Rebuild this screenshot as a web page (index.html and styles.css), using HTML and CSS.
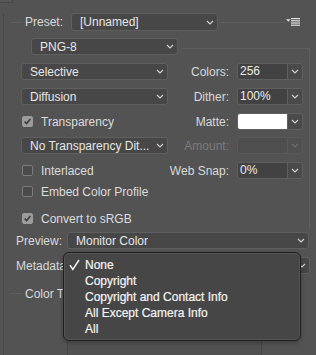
FILE: index.html
```html
<!DOCTYPE html>
<html>
<head>
<meta charset="utf-8">
<link rel="stylesheet" href="styles.css">
</head>
<body>
<div class="corner"></div>
<div class="page">
  <div class="gutter"></div>
  <div class="content">
    <div class="row row-preset">
      <div class="rule r-preset-l"></div>
      <div class="plabel">Preset:</div>
      <div class="select w147"><span>[Unnamed]</span><svg class="chev" width="8" height="5" viewBox="0 0 8 5"><path d="M1 1 L4 4 L7 1"/></svg></div>
      <div class="rule r-preset-r"></div>
      <svg class="menuicon" width="15" height="8" viewBox="0 0 15 8"><polygon points="0,1.2 4.6,1.2 2.3,3.8"/><rect x="5" y="0" width="9" height="1.2"/><rect x="5" y="2.2" width="9" height="1.2"/><rect x="5" y="4.4" width="9" height="1.2"/><rect x="5" y="6.6" width="9" height="1.2"/></svg>
    </div>

    <div class="group">
      <div class="row r2">
        <div class="select w147 png"><span>PNG-8</span><svg class="chev" width="8" height="5" viewBox="0 0 8 5"><path d="M1 1 L4 4 L7 1"/></svg></div>
        <div class="rule r-group"></div>
      </div>

      <div class="row r3">
        <div class="select w147 left"><span>Selective</span><svg class="chev" width="8" height="5" viewBox="0 0 8 5"><path d="M1 1 L4 4 L7 1"/></svg></div>
        <div class="lbl">Colors:</div>
        <div class="field"><div class="val">256</div><div class="btn"><svg class="chev" width="8" height="5" viewBox="0 0 8 5"><path d="M1 1 L4 4 L7 1"/></svg></div></div>
      </div>

      <div class="row r4">
        <div class="select w147 left"><span>Diffusion</span><svg class="chev" width="8" height="5" viewBox="0 0 8 5"><path d="M1 1 L4 4 L7 1"/></svg></div>
        <div class="lbl">Dither:</div>
        <div class="field"><div class="val">100%</div><div class="btn"><svg class="chev" width="8" height="5" viewBox="0 0 8 5"><path d="M1 1 L4 4 L7 1"/></svg></div></div>
      </div>

      <div class="row r5">
        <div class="check w147c"><div class="cb on"><svg width="9" height="9" viewBox="0 0 9 9"><path d="M1.6 4.6 L3.6 6.6 L7.4 2"/></svg></div><span>Transparency</span></div>
        <div class="lbl">Matte:</div>
        <div class="field"><div class="val white"></div><div class="btn"><svg class="chev" width="8" height="5" viewBox="0 0 8 5"><path d="M1 1 L4 4 L7 1"/></svg></div></div>
      </div>

      <div class="row r6">
        <div class="select w147 left"><span>No Transparency Dit...</span><svg class="chev" width="8" height="5" viewBox="0 0 8 5"><path d="M1 1 L4 4 L7 1"/></svg></div>
        <div class="lbl dim">Amount:</div>
        <div class="field disabled"><div class="val"></div><div class="btn"><svg class="chev" width="8" height="5" viewBox="0 0 8 5"><path d="M1 1 L4 4 L7 1"/></svg></div></div>
      </div>

      <div class="row r7">
        <div class="check w147c"><div class="cb"></div><span>Interlaced</span></div>
        <div class="lbl">Web Snap:</div>
        <div class="field"><div class="val">0%</div><div class="btn"><svg class="chev" width="8" height="5" viewBox="0 0 8 5"><path d="M1 1 L4 4 L7 1"/></svg></div></div>
      </div>

      <div class="row r8">
        <div class="check"><div class="cb"></div><span>Embed Color Profile</span></div>
      </div>

      <div class="row r9">
        <div class="check"><div class="cb on"><svg width="9" height="9" viewBox="0 0 9 9"><path d="M1.6 4.6 L3.6 6.6 L7.4 2"/></svg></div><span>Convert to sRGB</span></div>
      </div>
    </div>

    <div class="row r10">
      <div class="slabel">Preview:</div>
      <div class="select grow"><span>Monitor Color</span><svg class="chev" width="8" height="5" viewBox="0 0 8 5"><path d="M1 1 L4 4 L7 1"/></svg></div>
    </div>

    <div class="row r11">
      <div class="slabel">Metadata:</div>
      <div class="select grow meta"><span></span><svg class="chev" width="8" height="5" viewBox="0 0 8 5"><path d="M1 1 L4 4 L7 1"/></svg></div>
    </div>

    <div class="row r12">
      <div class="rule r-ct"></div>
      <div class="ctlabel">Color Table:</div>
    </div>

    <div class="table"></div>
  </div>
</div>

<div class="menu">
  <div class="mi"><svg class="mk" width="11" height="12" viewBox="0 0 11 12"><path d="M1 6.2 L3.8 10.4 L10 1"/></svg><span>None</span></div>
  <div class="mi"><span class="nomk"></span><span>Copyright</span></div>
  <div class="mi"><span class="nomk"></span><span>Copyright and Contact Info</span></div>
  <div class="mi"><span class="nomk"></span><span>All Except Camera Info</span></div>
  <div class="mi"><span class="nomk"></span><span>All</span></div>
</div>
</body>
</html>
```

FILE: styles.css
```css
html, body {
  margin: 0;
  padding: 0;
}
body {
  width: 316px;
  height: 355px;
  overflow: hidden;
  background: #535353;
  font-family: "Liberation Sans", Arial, sans-serif;
  font-size: 12px;
  color: #d9d9d9;
  position: relative;
}
.corner {
  box-sizing: border-box;
  width: 13px;
  height: 3px;
  border-right: 1px solid #474747;
  border-bottom: 1px solid #474747;
  background: #565656;
}
.page {
  display: flex;
  height: 352px;
}
.gutter {
  flex: none;
  width: 3px;
  margin-top: 10px;
  border-right: 1px solid #474747;
}
.content {
  flex: 1;
  display: flex;
  flex-direction: column;
  padding-top: 10px;
  min-width: 0;
}
.row {
  display: flex;
  align-items: center;
  height: 17px;
  flex: none;
}
.rule {
  height: 1px;
  background: #5f5f5f;
  flex: none;
}
.row-preset {
  height: 18px;
}
.r-preset-l {
  margin-left: 7px;
  width: 12px;
}
.plabel {
  margin-left: 2px;
  width: 46px;
  flex: none;
}
.r-preset-r {
  margin-left: 2px;
  width: 65px;
}
.menuicon {
  margin-left: 1px;
  fill: #e2e2e2;
  flex: none;
}

.select {
  display: flex;
  align-items: center;
  justify-content: space-between;
  box-sizing: border-box;
  height: 17px;
  border: 1px solid #5f5f5f;
  border-radius: 3px;
  background: #474747;
  padding: 0 3px 0 8px;
  color: #e6e6e6;
  flex: none;
  white-space: nowrap;
}
.row-preset .select {
  height: 18px;
}
.w147 {
  width: 147px;
}
.chev {
  flex: none;
  fill: none;
  stroke: #cfcfcf;
  stroke-width: 1.2;
}
.group {
  position: relative;
  margin-top: 7px;
  margin-right: 6px;
  padding-bottom: 1px;
  display: flex;
  flex-direction: column;
}
.group::after {
  content: "";
  position: absolute;
  right: 0;
  top: 10px;
  bottom: 0;
  width: 1px;
  background: #5f5f5f;
}
.png {
  margin-left: 27px;
}
.r-group {
  flex: 1;
  margin-left: 5px;
  margin-top: 3px;
}
.r3, .r4, .r5, .r7 {
  margin-top: 8px;
}
.r6 {
  margin-top: 7px;
}
.r8 {
  margin-top: 4px;
}
.r9 {
  margin-top: 10px;
}
.left {
  margin-left: 17px;
}
.lbl {
  width: 61px;
  text-align: right;
  flex: none;
  white-space: nowrap;
}
.lbl.dim {
  color: #7b7b7b;
}
.field {
  display: flex;
  box-sizing: border-box;
  width: 66px;
  height: 17px;
  margin-left: 8px;
  border: 1px solid #5f5f5f;
  border-radius: 3px;
  overflow: hidden;
  flex: none;
}
.val {
  width: 49px;
  flex: none;
  background: #424242;
  padding-left: 2px;
  box-sizing: border-box;
  line-height: 15px;
  color: #ececec;
}
.val.white {
  background: #ffffff;
}
.btn {
  flex: 1;
  border-left: 1px solid #5f5f5f;
  background: #4a4a4a;
  display: flex;
  align-items: center;
  justify-content: center;
}
.field.disabled {
  border-color: #595959;
}
.field.disabled .val {
  background: #4e4e4e;
}
.field.disabled .btn {
  background: #505050;
  border-left-color: #595959;
}
.field.disabled .chev {
  stroke: #6e6e6e;
}

.check {
  display: flex;
  align-items: center;
  margin-left: 18px;
  color: #dcdcdc;
  white-space: nowrap;
}
.w147c {
  width: 146px;
  flex: none;
}
.cb {
  width: 11px;
  height: 11px;
  box-sizing: border-box;
  border: 1px solid #7c7c7c;
  border-radius: 2px;
  background: #4a4a4a;
  margin-right: 8px;
  display: flex;
  align-items: center;
  justify-content: center;
  flex: none;
}
.cb.on {
  background: #9b9b9b;
  border-color: #9b9b9b;
}
.cb svg {
  fill: none;
  stroke: #3c3c3c;
  stroke-width: 1.6;
}

.r10 {
  margin-top: 4px;
}
.r11 {
  margin-top: 8px;
}
.slabel {
  margin-left: 12px;
  width: 51px;
  flex: none;
  white-space: nowrap;
}
.grow {
  flex: 1;
  margin-right: 7px;
}
.meta {
  margin-right: 6px;
}
.r12 {
  margin-top: 11px;
}
.r-ct {
  margin-left: 6px;
  width: 13px;
}
.ctlabel {
  margin-left: 2px;
  white-space: nowrap;
}
.table {
  flex: 1;
  margin-top: 6px;
  margin-left: 63px;
  width: 193px;
  border-left: 1px solid #454545;
  border-right: 1px solid #454545;
  background: #515151;
}

.menu {
  position: absolute;
  left: 63px;
  top: 252px;
  width: 238px;
  height: 89px;
  box-sizing: border-box;
  border: 1px solid #1f1f1f;
  border-radius: 6px;
  background: #464646;
  box-shadow: inset 0 0 0 1px #555555, 0 2px 4px rgba(0,0,0,0.25);
  padding: 4px 0 3px 0;
}
.mi {
  display: flex;
  align-items: center;
  height: 16px;
  color: #f4f4f4;
  white-space: nowrap;
  -webkit-text-stroke: 0.2px #f4f4f4;
}
.mk {
  margin-left: 5px;
  margin-right: 5px;
  width: 11px;
  height: 12px;
  flex: none;
  fill: none;
  stroke: #f4f4f4;
  stroke-width: 1.5;
}
.nomk {
  display: block;
  width: 21px;
  flex: none;
}
```
